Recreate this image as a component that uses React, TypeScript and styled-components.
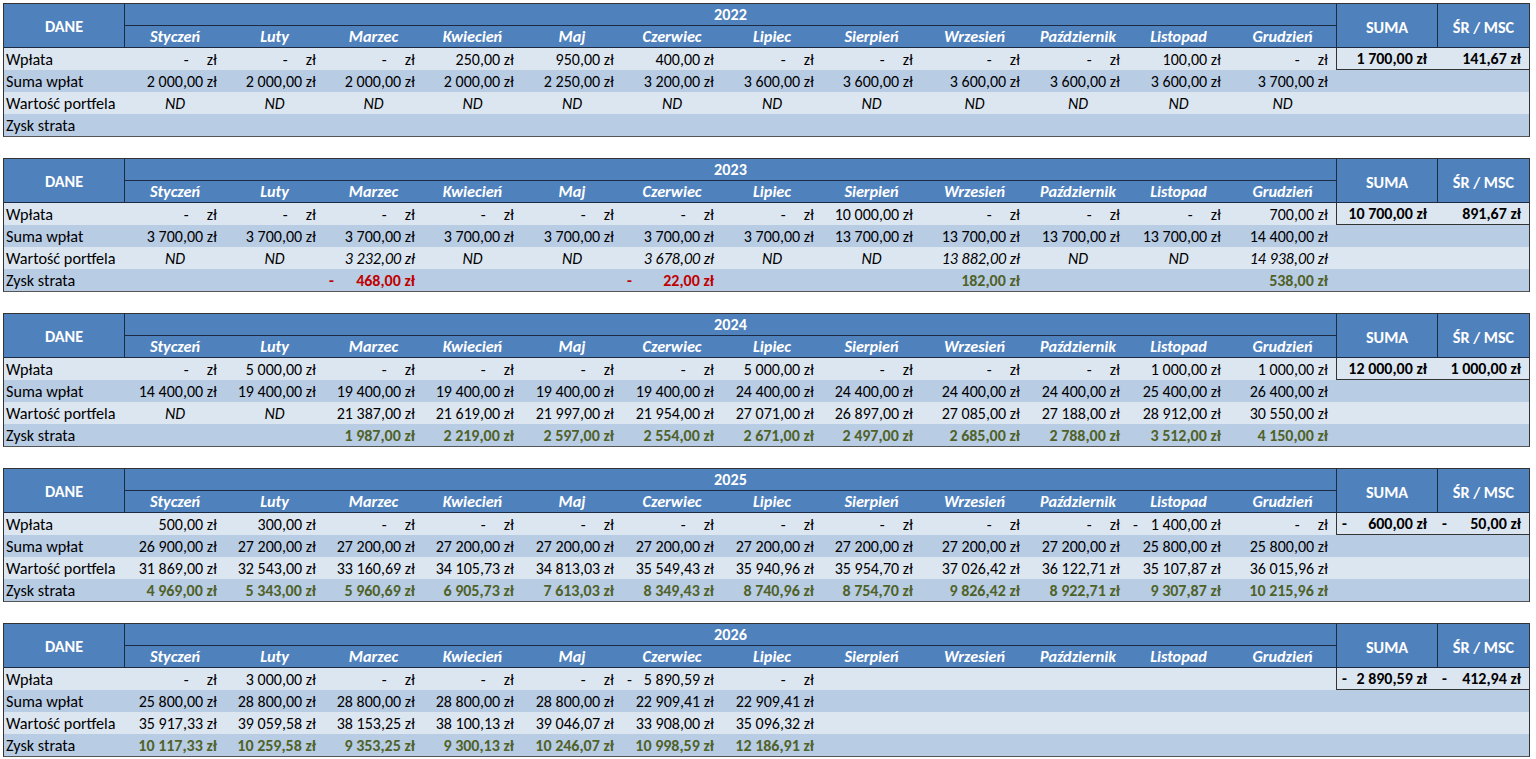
import React from 'react';
import styled, { createGlobalStyle, css } from 'styled-components';

const GlobalStyle = createGlobalStyle`
  html, body { margin: 0; padding: 0; background: #ffffff; }
  body { font-family: Carlito, Calibri, Lato, "Open Sans", sans-serif; }
`;

const COLS =
  '121px 100px 99px 99px 99px 100px 100px 100px 99px 107px 100px 101px 107px 101px 92px';

const HEAD_BG = '#4F81BD';
const HEAD_LINE = '#1c2b42';
const LIGHT = '#DCE6F1';
const DARK = '#B8CCE4';
const RED = '#C00000';
const GREEN = '#4F6228';

type Tone = 'light' | 'dark';
type Val = number | 'ND' | null;

const Page = styled.div`
  padding: 3px 0 0 3px;
  display: flex;
  flex-direction: column;
  gap: 21px;
`;

const Sheet = styled.div`
  width: 1527px;
  box-sizing: border-box;
  border: 1px solid #333333;
  border-bottom-color: #555555;
  display: grid;
  grid-template-columns: ${COLS};
  grid-template-rows: repeat(6, 22px);
  font-size: 16.2px;
  color: #000;
`;

const HeadCell = styled.div`
  background: ${HEAD_BG};
  color: #ffffff;
  font-weight: 700;
  display: flex;
  align-items: center;
  justify-content: center;
  box-sizing: border-box;
  white-space: nowrap;
`;

const DaneHead = styled(HeadCell)`
  grid-column: 1;
  grid-row: 1 / span 2;
  border-right: 1px solid ${HEAD_LINE};
  border-bottom: 1px solid ${HEAD_LINE};
  padding-top: 1px;
`;

const YearHead = styled(HeadCell)`
  grid-column: 2 / span 12;
  grid-row: 1;
  border-bottom: 1px solid ${HEAD_LINE};
`;

const MonthHead = styled(HeadCell)`
  grid-row: 2;
  font-style: italic;
  border-bottom: 1px solid ${HEAD_LINE};
`;

const SumHead = styled(HeadCell)<{ $col: number }>`
  grid-column: ${(p) => p.$col};
  grid-row: 1 / span 2;
  border-left: 1px solid ${HEAD_LINE};
  border-bottom: 1px solid ${HEAD_LINE};
  padding-top: 3px;
`;

const Label = styled.div<{ $tone: Tone }>`
  background: ${(p) => (p.$tone === 'light' ? LIGHT : DARK)};
  display: flex;
  align-items: center;
  padding-left: 2px;
  white-space: nowrap;
`;

const Cell = styled.div<{
  $tone: Tone;
  $align: 'end' | 'center' | 'split';
  $italic?: boolean;
  $bold?: boolean;
  $color?: string;
  $box?: 'first' | 'last';
}>`
  background: ${(p) => (p.$tone === 'light' ? LIGHT : DARK)};
  display: flex;
  align-items: center;
  box-sizing: border-box;
  white-space: nowrap;
  overflow: hidden;
  font-size: 16px;
  padding: 0 8px 0 5px;
  justify-content: ${(p) =>
    p.$align === 'end' ? 'flex-end' : p.$align === 'center' ? 'center' : 'space-between'};
  font-style: ${(p) => (p.$italic ? 'italic' : 'normal')};
  font-weight: ${(p) => (p.$bold ? 700 : 400)};
  color: ${(p) => p.$color || '#000'};
  ${(p) =>
    p.$align === 'center' &&
    css`
      padding: 0 2px;
    `}
  ${(p) =>
    p.$box &&
    css`
      border-bottom: 1px solid #333333;
    `}
  ${(p) =>
    p.$box === 'first' &&
    css`
      border-left: 1px solid #333333;
      padding-right: 10px;
    `}
`;

const ZeroDash = styled.span`
  margin-right: 18px;
`;

const MONTHS = [
  'Styczeń',
  'Luty',
  'Marzec',
  'Kwiecień',
  'Maj',
  'Czerwiec',
  'Lipiec',
  'Sierpień',
  'Wrzesień',
  'Październik',
  'Listopad',
  'Grudzień',
];

function fmt(n: number): string {
  const [int, dec] = Math.abs(n).toFixed(2).split('.');
  const grouped = int.replace(/\B(?=(\d{3})+(?!\d))/g, '\u00a0');
  return `${grouped},${dec}\u00a0zł`;
}

type CellStyle = { italic?: boolean; bold?: boolean; colorBySign?: boolean };

function ValueCell({
  v,
  tone,
  style,
  box,
}: {
  v: Val;
  tone: Tone;
  style: CellStyle;
  box?: 'first' | 'last';
}) {
  if (v === null) return <Cell $tone={tone} $align="end" $box={box} />;
  if (v === 'ND')
    return (
      <Cell $tone={tone} $align="center" $italic $box={box}>
        ND
      </Cell>
    );
  const color = style.colorBySign ? (v < 0 ? RED : GREEN) : undefined;
  if (v === 0)
    return (
      <Cell $tone={tone} $align="end" $italic={style.italic} $bold={style.bold} $color={color} $box={box}>
        <ZeroDash>-</ZeroDash>zł
      </Cell>
    );
  if (v < 0)
    return (
      <Cell $tone={tone} $align="split" $italic={style.italic} $bold={style.bold} $color={color} $box={box}>
        <span>-</span>
        <span>{fmt(v)}</span>
      </Cell>
    );
  return (
    <Cell $tone={tone} $align="end" $italic={style.italic} $bold={style.bold} $color={color} $box={box}>
      {fmt(v)}
    </Cell>
  );
}

type YearData = {
  year: number;
  wplata: Val[];
  suma: number;
  sr: number;
  sumaWplat: Val[];
  wartosc: Val[];
  zysk: Val[];
  italicWartosc: boolean;
};

const N5: Val[] = [null, null, null, null, null];

const YEARS: YearData[] = [
  {
    year: 2022,
    wplata: [0, 0, 0, 250, 950, 400, 0, 0, 0, 0, 100, 0],
    suma: 1700,
    sr: 141.67,
    sumaWplat: [2000, 2000, 2000, 2000, 2250, 3200, 3600, 3600, 3600, 3600, 3600, 3700],
    wartosc: Array(12).fill('ND'),
    zysk: Array(12).fill(null),
    italicWartosc: true,
  },
  {
    year: 2023,
    wplata: [0, 0, 0, 0, 0, 0, 0, 10000, 0, 0, 0, 700],
    suma: 10700,
    sr: 891.67,
    sumaWplat: [3700, 3700, 3700, 3700, 3700, 3700, 3700, 13700, 13700, 13700, 13700, 14400],
    wartosc: ['ND', 'ND', 3232, 'ND', 'ND', 3678, 'ND', 'ND', 13882, 'ND', 'ND', 14938],
    zysk: [null, null, -468, null, null, -22, null, null, 182, null, null, 538],
    italicWartosc: true,
  },
  {
    year: 2024,
    wplata: [0, 5000, 0, 0, 0, 0, 5000, 0, 0, 0, 1000, 1000],
    suma: 12000,
    sr: 1000,
    sumaWplat: [14400, 19400, 19400, 19400, 19400, 19400, 24400, 24400, 24400, 24400, 25400, 26400],
    wartosc: ['ND', 'ND', 21387, 21619, 21997, 21954, 27071, 26897, 27085, 27188, 28912, 30550],
    zysk: [null, null, 1987, 2219, 2597, 2554, 2671, 2497, 2685, 2788, 3512, 4150],
    italicWartosc: false,
  },
  {
    year: 2025,
    wplata: [500, 300, 0, 0, 0, 0, 0, 0, 0, 0, -1400, 0],
    suma: -600,
    sr: -50,
    sumaWplat: [26900, 27200, 27200, 27200, 27200, 27200, 27200, 27200, 27200, 27200, 25800, 25800],
    wartosc: [
      31869, 32543, 33160.69, 34105.73, 34813.03, 35549.43, 35940.96, 35954.7, 37026.42, 36122.71,
      35107.87, 36015.96,
    ],
    zysk: [
      4969, 5343, 5960.69, 6905.73, 7613.03, 8349.43, 8740.96, 8754.7, 9826.42, 8922.71, 9307.87,
      10215.96,
    ],
    italicWartosc: false,
  },
  {
    year: 2026,
    wplata: [0, 3000, 0, 0, 0, -5890.59, 0, ...N5],
    suma: -2890.59,
    sr: -412.94,
    sumaWplat: [25800, 28800, 28800, 28800, 28800, 22909.41, 22909.41, ...N5],
    wartosc: [35917.33, 39059.58, 38153.25, 38100.13, 39046.07, 33908, 35096.32, ...N5],
    zysk: [10117.33, 10259.58, 9353.25, 9300.13, 10246.07, 10998.59, 12186.91, ...N5],
    italicWartosc: false,
  },
];

function YearTable({ d }: { d: YearData }) {
  const rows: { label: string; tone: Tone; values: Val[]; style: CellStyle; summary?: boolean }[] = [
    { label: 'Wpłata', tone: 'light', values: d.wplata, style: {}, summary: true },
    { label: 'Suma wpłat', tone: 'dark', values: d.sumaWplat, style: {} },
    { label: 'Wartość portfela', tone: 'light', values: d.wartosc, style: { italic: d.italicWartosc } },
    { label: 'Zysk strata', tone: 'dark', values: d.zysk, style: { bold: true, colorBySign: true } },
  ];
  return (
    <Sheet>
      <DaneHead>DANE</DaneHead>
      <YearHead>{d.year}</YearHead>
      <SumHead $col={14}>SUMA</SumHead>
      <SumHead $col={15}>ŚR / MSC</SumHead>
      {MONTHS.map((m) => (
        <MonthHead key={m}>{m}</MonthHead>
      ))}
      {rows.map((r) => (
        <React.Fragment key={r.label}>
          <Label $tone={r.tone}>{r.label}</Label>
          {r.values.map((v, i) => (
            <ValueCell key={i} v={v} tone={r.tone} style={r.style} />
          ))}
          {r.summary ? (
            <>
              <ValueCell v={d.suma} tone={r.tone} style={{ bold: true }} box="first" />
              <ValueCell v={d.sr} tone={r.tone} style={{ bold: true }} box="last" />
            </>
          ) : (
            <>
              <Cell $tone={r.tone} $align="end" />
              <Cell $tone={r.tone} $align="end" />
            </>
          )}
        </React.Fragment>
      ))}
    </Sheet>
  );
}

export default function App() {
  return (
    <>
      <GlobalStyle />
      <Page>
        {YEARS.map((y) => (
          <YearTable key={y.year} d={y} />
        ))}
      </Page>
    </>
  );
}
